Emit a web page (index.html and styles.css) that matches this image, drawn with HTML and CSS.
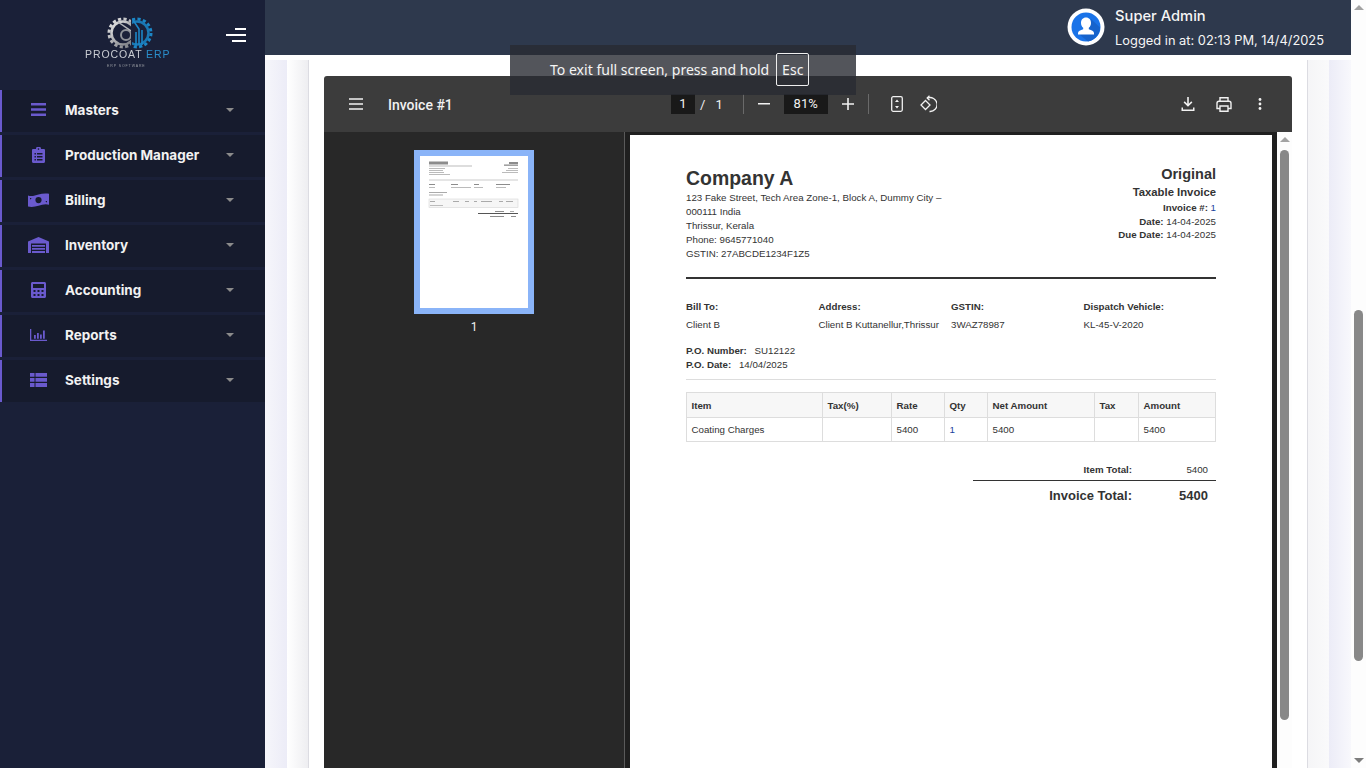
FILE: index.html
```html
<!DOCTYPE html>
<html lang="en">
<head>
    <meta charset="UTF-8">
    <title>Invoice #1</title>
    <link rel="stylesheet" href="styles.css">
</head>
<body>
    <div id="container">
        <aside id="sidebar">
            <div id="brand">
                <svg id="logo" width="90" height="52" viewBox="0 0 90 52">
                    <defs>
                        <linearGradient id="gear-grey" x1="0" y1="0" x2="1" y2="1">
                            <stop offset="0" stop-color="#e8e8e8"/>
                            <stop offset="1" stop-color="#70737a"/>
                        </linearGradient>
                        <clipPath id="clip-left"><rect x="20" y="0" width="28" height="34"/></clipPath>
                        <clipPath id="clip-right"><rect x="49" y="0" width="24" height="34"/></clipPath>
                    </defs>
                    <g clip-path="url(#clip-left)">
                        <circle cx="40" cy="17" r="14" fill="none" stroke="url(#gear-grey)" stroke-width="3" stroke-dasharray="3.200 2.300"/>
                        <circle cx="40" cy="17" r="11.500" fill="none" stroke="url(#gear-grey)" stroke-width="2.500"/>
                        <circle cx="43" cy="19" r="5" fill="none" stroke="#8f9298" stroke-width="2"/>
                        <path d="M35 6l13 9" stroke="#b5b7bb" stroke-width="1.500"/>
                    </g>
                    <g clip-path="url(#clip-right)">
                        <circle cx="54" cy="17" r="14" fill="none" stroke="#1c86c6" stroke-width="3" stroke-dasharray="3.200 2.300"/>
                        <circle cx="54" cy="17" r="11.500" fill="none" stroke="#1a78b4" stroke-width="2.500"/>
                        <path d="M50 4l6 9v16M53 30V16M59 29V14" fill="none" stroke="#1c86c6" stroke-width="1.600"/>
                    </g>
                    <text class="logo-name" x="2" y="42">PROCOAT <tspan fill="#2a8ecb">ERP</tspan></text>
                    <text class="logo-sub" x="24" y="51">ERP SOFTWARE</text>
                </svg>
                <svg id="nav-toggle" width="20" height="16" viewBox="0 0 20 16">
                    <path d="M9 2h11M0 8h20M6 14h14" stroke="#fff" stroke-width="2"/>
                </svg>
            </div>
            <nav id="menu">
                <a class="menu-item">
                    <span class="menu-icon">
                        <svg width="15" height="13" viewBox="0 0 15 13"><path d="M0 0h15v2.600H0zM0 5.200h15v2.600H0zM0 10.400h15V13H0z"/></svg>
                    </span>
                    <span class="menu-label">Masters</span><i class="caret"></i>
                </a>
                <a class="menu-item">
                    <span class="menu-icon">
                        <svg width="13" height="16" viewBox="0 0 13 16"><path fill-rule="evenodd" d="M1.200 2H4a2.500 2.500 0 0 1 5 0h2.800c.7 0 1.200.5 1.200 1.200v11.600c0 .7-.5 1.200-1.200 1.200H1.200C.5 16 0 15.500 0 14.800V3.200C0 2.500.5 2 1.200 2zM6.500 1.300a.8.8 0 1 0 0 1.600.8.8 0 0 0 0-1.600zM2.500 6v1.400h1.400V6zM5 6v1.400h5.500V6zM2.500 9v1.400h1.400V9zM5 9v1.400h5.500V9zM2.500 12v1.400h1.400V12zM5 12v1.400h5.500V12z"/></svg>
                    </span>
                    <span class="menu-label">Production Manager</span><i class="caret"></i>
                </a>
                <a class="menu-item">
                    <span class="menu-icon">
                        <svg width="21" height="14" viewBox="0 0 21 14"><path fill-rule="evenodd" d="M0 2.500C3.500 3.800 7 2.500 10.500 1.500 14 .5 17.500 0 21 .8v11c-3.500-1.300-7 0-10.500 1-3.500 1-7 1.500-10.500.7zM10.500 4a3.100 3.100 0 1 0 0 6.200 3.100 3.100 0 0 0 0-6.200zM2 5v1.500A2 2 0 0 0 3.500 5zM17.500 8A2 2 0 0 0 19 9.500V8z"/></svg>
                    </span>
                    <span class="menu-label">Billing</span><i class="caret"></i>
                </a>
                <a class="menu-item">
                    <span class="menu-icon">
                        <svg width="21" height="16" viewBox="0 0 21 16"><path fill-rule="evenodd" d="M0 16V4.500L10.500 0 21 4.500V16h-3V6.500H3V16zM4 8h13v1.800H4zM4 11h13v1.800H4zM4 14h13v2H4z"/></svg>
                    </span>
                    <span class="menu-label">Inventory</span><i class="caret"></i>
                </a>
                <a class="menu-item">
                    <span class="menu-icon">
                        <svg width="15" height="16" viewBox="0 0 15 16"><path fill-rule="evenodd" d="M1.500 0h12c.8 0 1.500.7 1.500 1.500v13c0 .8-.7 1.500-1.500 1.500h-12C.7 16 0 15.300 0 14.500v-13C0 .7.700 0 1.500 0zM2 2v4h11V2zM2.500 8v2h2V8zM6.500 8v2h2V8zM10.500 8v2h2V8zM2.500 12v2h2v-2zM6.500 12v2h2v-2zM10.500 12v2h2v-2z"/></svg>
                    </span>
                    <span class="menu-label">Accounting</span><i class="caret"></i>
                </a>
                <a class="menu-item">
                    <span class="menu-icon">
                        <svg width="17" height="12" viewBox="0 0 17 12"><path d="M0 0h1.300v10.700H17V12H0zM4 6h1.800v3.700H4zM7 4h1.800v5.700H7zM10 5.500h1.800v4.200H10zM13 1.500h1.800v8.200H13z"/></svg>
                    </span>
                    <span class="menu-label">Reports</span><i class="caret"></i>
                </a>
                <a class="menu-item">
                    <span class="menu-icon">
                        <svg width="17" height="14" viewBox="0 0 17 14"><path d="M0 0h4.500v3.800H0zM5.500 0H17v3.800H5.500zM0 5h4.500v3.800H0zM5.500 5H17v3.800H5.500zM0 10h4.500v4H0zM5.500 10H17v4H5.500z"/></svg>
                    </span>
                    <span class="menu-label">Settings</span><i class="caret"></i>
                </a>
            </nav>
        </aside>

        <div id="main-col">
            <header id="topbar">
                <svg id="avatar" width="38" height="38" viewBox="0 0 38 38">
                    <circle cx="19" cy="19" r="18.500" fill="#fff"/>
                    <circle cx="19" cy="19" r="14.500" fill="#1a73e8"/>
                    <path d="M24 11l9 8.500A14.500 14.500 0 0 1 21 33.400L13 27z" fill="#1663cc"/>
                    <path d="M19 9.500c3.200 0 5 2.400 5 5.400 0 2-.9 3.800-2.200 4.900v1.500c2.700 1 5.200 1.800 5.200 3.600v1.600H11v-1.600c0-1.800 2.500-2.600 5.200-3.600v-1.500c-1.300-1.100-2.200-2.900-2.200-4.900 0-3 1.800-5.400 5-5.400z" fill="#fff"/>
                </svg>
                <div id="user-info">
                    <div id="user-name">Super Admin</div>
                    <div id="user-login">Logged in at: 02:13 PM, 14/4/2025</div>
                </div>
            </header>

            <main id="page-bg">
                <div id="page-inner">
                    <section id="card">
                        <div id="viewer">
                            <div id="pdf-toolbar">
                                <div id="tb-left">
                                    <svg class="tb-icon" width="16" height="12" viewBox="0 0 16 12"><path d="M1 1h14M1 6h14M1 11h14" stroke="#f1f1f1" stroke-width="1.400"/></svg>
                                    <span id="pdf-title">Invoice #1</span>
                                </div>
                                <div id="tb-center">
                                    <span class="tb-input page-input">1</span>
                                    <span class="tb-sep">/</span>
                                    <span class="tb-num">1</span>
                                    <i class="tb-divider first"></i>
                                    <svg class="zoom-out" width="12" height="2" viewBox="0 0 12 2"><path d="M0 0h12v1.600H0z" fill="#f1f1f1"/></svg>
                                    <span class="tb-input zoom-input">81%</span>
                                    <svg class="zoom-in" width="12" height="12" viewBox="0 0 12 12"><path d="M5.200 0h1.600v5.200H12v1.600H6.800V12H5.200V6.800H0V5.200h5.200z" fill="#f1f1f1"/></svg>
                                    <i class="tb-divider second"></i>
                                    <svg class="fit-icon" width="12" height="16" viewBox="0 0 12 16"><rect x=".7" y=".7" width="10.600" height="14.600" rx="1.500" fill="none" stroke="#f1f1f1" stroke-width="1.300"/><path d="M6 3.500 8 6H4zM6 12.500 4 10h4z" fill="#f1f1f1"/></svg>
                                    <svg class="rotate-icon" width="18" height="18" viewBox="0 0 18 18"><path d="M6.500 5.500 11 10l-4.500 4.500L2 10z" fill="none" stroke="#f1f1f1" stroke-width="1.300"/><path d="M8.500 3A7 7 0 1 1 10.500 16.500" fill="none" stroke="#f1f1f1" stroke-width="1.300"/><path d="M10.500 .8 8.200 3l2.300 2.200" fill="none" stroke="#f1f1f1" stroke-width="1.300"/></svg>
                                </div>
                                <div id="tb-right">
                                    <svg width="14" height="14" viewBox="0 0 14 14"><path d="M6.200 0h1.600v6.800l2.500-2.500 1.100 1.100L7 9.800 2.600 5.400l1.100-1.100 2.500 2.500zM.5 10.500h1.500v2h10v-2h1.500V14H.5z" fill="#f1f1f1"/></svg>
                                    <svg width="16" height="15" viewBox="0 0 16 15"><path d="M4 4V.7h8V4M4 11.500H1V6.200C1 5 1.800 4.300 3 4.300h10c1.200 0 2 .7 2 1.900v5.300h-3M4 9h8v5.300H4z" fill="none" stroke="#f1f1f1" stroke-width="1.400"/></svg>
                                    <svg class="more-icon" width="4" height="12" viewBox="0 0 4 12"><circle cx="2" cy="1.500" r="1.400" fill="#f1f1f1"/><circle cx="2" cy="6" r="1.400" fill="#f1f1f1"/><circle cx="2" cy="10.500" r="1.400" fill="#f1f1f1"/></svg>
                                </div>
                            </div>

                            <div id="pdf-body">
                                <div id="thumbs">
                                    <div id="thumb-frame">
                                        <svg class="thumb-page" width="108" height="152" viewBox="0 0 108 152">
                                            <rect width="108" height="152" fill="#fff"/>
                                            <g fill="#8c8c8c">
                                                <rect x="9" y="5.500" width="19" height="3"/>
                                                <rect x="9" y="9.500" width="43" height="1" fill="#bbb"/>
                                                <rect x="9" y="12" width="16" height="1" fill="#bbb"/>
                                                <rect x="9" y="14" width="14" height="1" fill="#bbb"/>
                                                <rect x="9" y="16" width="15" height="1" fill="#bbb"/>
                                                <rect x="9" y="18" width="21" height="1" fill="#bbb"/>
                                                <rect x="89" y="6" width="9" height="2"/>
                                                <rect x="84" y="8.500" width="14" height="1.300"/>
                                                <rect x="88" y="12" width="10" height="1" fill="#bbb"/>
                                                <rect x="86" y="14" width="12" height="1" fill="#bbb"/>
                                                <rect x="82" y="16" width="16" height="1" fill="#bbb"/>
                                                <rect x="9" y="23.500" width="89" height="1" fill="#ccc"/>
                                                <rect x="9" y="28" width="6" height="1"/>
                                                <rect x="31" y="28" width="7" height="1"/>
                                                <rect x="54" y="28" width="5" height="1"/>
                                                <rect x="76" y="28" width="14" height="1"/>
                                                <rect x="9" y="31" width="6" height="1" fill="#bbb"/>
                                                <rect x="31" y="31" width="20" height="1" fill="#bbb"/>
                                                <rect x="54" y="31" width="9" height="1" fill="#bbb"/>
                                                <rect x="76" y="31" width="10" height="1" fill="#bbb"/>
                                                <rect x="9" y="36" width="18" height="1" fill="#aaa"/>
                                                <rect x="9" y="38.500" width="14" height="1" fill="#aaa"/>
                                                <rect x="9" y="43" width="89" height="8.500" fill="#f6f6f6" stroke="#d8d8d8" stroke-width=".6"/>
                                                <rect x="10" y="45" width="5" height="1" fill="#aaa"/>
                                                <rect x="33" y="45" width="6" height="1" fill="#aaa"/>
                                                <rect x="45" y="45" width="4" height="1" fill="#aaa"/>
                                                <rect x="54" y="45" width="3" height="1" fill="#aaa"/>
                                                <rect x="61" y="45" width="11" height="1" fill="#aaa"/>
                                                <rect x="79" y="45" width="4" height="1" fill="#aaa"/>
                                                <rect x="86" y="45" width="7" height="1" fill="#aaa"/>
                                                <rect x="10" y="49" width="13" height="1" fill="#bbb"/>
                                                <rect x="75" y="55" width="9" height="1"/>
                                                <rect x="90" y="55" width="4" height="1" fill="#aaa"/>
                                                <rect x="58" y="57" width="40" height="1" fill="#555"/>
                                                <rect x="70" y="60" width="14" height="1"/>
                                                <rect x="91" y="60" width="5" height="1"/>
                                            </g>
                                        </svg>
                                    </div>
                                    <div id="thumb-num">1</div>
                                </div>
                                <div id="doc-area">
                                    <article id="invoice">
                                        <div class="inv-head">
                                            <div class="inv-company">
                                                <h1>Company A</h1>
                                                <p>123 Fake Street, Tech Area Zone-1, Block A, Dummy City – 000111 India</p>
                                                <p>Thrissur, Kerala</p>
                                                <p>Phone: 9645771040</p>
                                                <p>GSTIN: 27ABCDE1234F1Z5</p>
                                            </div>
                                            <div class="inv-meta">
                                                <div class="inv-original">Original</div>
                                                <div class="inv-type">Taxable Invoice</div>
                                                <div class="inv-line"><b>Invoice #:</b> <span class="link">1</span></div>
                                                <div class="inv-line"><b>Date:</b> 14-04-2025</div>
                                                <div class="inv-line"><b>Due Date:</b> 14-04-2025</div>
                                            </div>
                                        </div>
                                        <hr class="rule-dark">
                                        <div class="inv-parties">
                                            <div><b>Bill To:</b><span>Client B</span></div>
                                            <div><b>Address:</b><span>Client B Kuttanellur,Thrissur</span></div>
                                            <div><b>GSTIN:</b><span>3WAZ78987</span></div>
                                            <div><b>Dispatch Vehicle:</b><span>KL-45-V-2020</span></div>
                                        </div>
                                        <div class="inv-po">
                                            <div><b>P.O. Number:</b> SU12122</div>
                                            <div><b>P.O. Date:</b> 14/04/2025</div>
                                        </div>
                                        <hr class="rule-light">
                                        <table class="inv-table">
                                            <colgroup>
                                                <col class="c-item"><col class="c-tax"><col class="c-rate"><col class="c-qty"><col class="c-net"><col class="c-t"><col class="c-amt">
                                            </colgroup>
                                            <thead>
                                                <tr><th>Item</th><th>Tax(%)</th><th>Rate</th><th>Qty</th><th>Net Amount</th><th>Tax</th><th>Amount</th></tr>
                                            </thead>
                                            <tbody>
                                                <tr><td>Coating Charges</td><td></td><td>5400</td><td class="link">1</td><td>5400</td><td></td><td>5400</td></tr>
                                            </tbody>
                                        </table>
                                        <div class="inv-totals">
                                            <div class="tot-row"><b>Item Total:</b><span>5400</span></div>
                                            <div class="tot-row grand"><b>Invoice Total:</b><b>5400</b></div>
                                        </div>
                                    </article>
                                </div>
                                <div id="doc-scroll">
                                    <i class="arrow-up"></i>
                                    <div id="doc-thumb"></div>
                                </div>
                            </div>
                        </div>
                    </section>
                </div>
            </main>
        </div>

        <div id="page-scroll">
            <i class="arrow-up"></i>
            <div id="page-thumb"></div>
            <i class="arrow-down"></i>
        </div>
    </div>

    <div id="fs-toast">
        <span>To exit full screen, press and hold</span>
        <kbd>Esc</kbd>
    </div>
</body>
</html>
```

FILE: styles.css
```css
:root {
    --sidebar-color: #1a2038;
    --item-color: #161b2d;
    --accent-color: #6a5acd;
    --topbar-color: #2e394d;
    --pdf-bar-color: #3c3c3c;
    --pdf-bg-color: #282828;
    --ink-color: #333;
}

* {
    box-sizing: border-box;
}

html, body {
    margin: 0;
    padding: 0;
    height: 100%;
    overflow: hidden;
}

body {
    font-family: Inter, sans-serif;
    background-color: #fff;
}

#container {
    display: flex;
    height: 768px;
}

/* sidebar */
#sidebar {
    flex: 0 0 265px;
    background-color: var(--sidebar-color);
}

#brand {
    height: 90px;
    display: flex;
    align-items: flex-start;
    padding: 16px 19px 0 83px;
    justify-content: space-between;
}

#logo {
    filter: blur(0.3px);
}

#nav-toggle {
    margin-top: 11px;
}

.logo-name {
    font-family: "Liberation Sans", sans-serif;
    font-size: 10.500px;
    letter-spacing: 0.9px;
    fill: #c9ccd2;
}

.logo-sub {
    font-family: "Liberation Sans", sans-serif;
    font-size: 3.500px;
    letter-spacing: 0.9px;
    fill: #9a9da3;
}

#menu {
    display: flex;
    flex-direction: column;
    gap: 3px;
}

.menu-item {
    height: 42px;
    padding-bottom: 3px;
    display: flex;
    align-items: center;
    background-color: var(--item-color);
    border-left: 2px solid var(--accent-color);
    color: #f2f2f2;
}

.menu-icon {
    flex: 0 0 63px;
    padding-left: 12px;
    padding-right: 2px;
    display: flex;
    justify-content: center;
}

.menu-icon svg {
    fill: var(--accent-color);
}

.menu-label {
    flex: 1;
    font-size: 13.500px;
    font-weight: 700;
}

.caret {
    width: 0;
    height: 0;
    margin-right: 31px;
    border-left: 4px solid transparent;
    border-right: 4px solid transparent;
    border-top: 4px solid #8b8b8b;
}

/* top bar */
#main-col {
    flex: 1;
    display: flex;
    flex-direction: column;
    min-width: 0;
}

#topbar {
    flex: 0 0 55px;
    background-color: var(--topbar-color);
    display: flex;
    align-items: flex-start;
    justify-content: flex-end;
    padding: 8px 27px 0 0;
    color: #f5f5f5;
}

#avatar {
    margin-right: 10px;
}

#user-name {
    font-size: 14.700px;
    font-weight: 500;
    line-height: 16px;
}

#user-login {
    font-size: 12.850px;
    line-height: 17px;
    margin-top: 8px;
}

/* background strips round the card */
#page-bg {
    flex: 1;
    margin-top: 5px;
    padding: 0 22px;
    background: linear-gradient(90deg, #f6f6fb, #ececf7 22px, #fff 22px, #fff calc(100% - 22px), #ececf7 calc(100% - 22px), #f8f8fc);
    min-height: 0;
}

#page-inner {
    height: 100%;
    padding: 0 21px;
    background: linear-gradient(90deg, #fff, #eeeef1 21px, #fff 21px, #fff calc(100% - 21px), #f5f5f7 calc(100% - 21px), #fafafb);
}

#card {
    height: 100%;
    padding: 16px 15px 0 15px;
    background-color: #fff;
    border-left: 1px solid #dcdce2;
    border-right: 1px solid #dcdce2;
}

/* pdf viewer */
#viewer {
    height: 100%;
    display: flex;
    flex-direction: column;
    border-radius: 3px 3px 0 0;
    overflow: hidden;
}

#pdf-toolbar {
    flex: 0 0 56px;
    background-color: var(--pdf-bar-color);
    display: flex;
    align-items: center;
    font-family: Roboto, sans-serif;
    color: #f1f1f1;
    font-size: 13px;
}

#tb-left {
    flex: 0 0 347px;
    display: flex;
    align-items: center;
    padding-left: 24px;
}

#pdf-title {
    margin-left: 24px;
    margin-top: 2px;
    font-size: 14px;
    font-weight: 500;
}

#tb-center {
    display: flex;
    align-items: center;
}

.tb-input {
    background-color: #191919;
    height: 20px;
    line-height: 20px;
    text-align: center;
}

.page-input {
    width: 24px;
}

.tb-sep {
    margin-left: 5px;
}

.tb-num {
    margin-left: 10px;
}

.tb-divider {
    width: 1px;
    height: 20px;
    background-color: #6a6a6a;
}

.tb-divider.first {
    margin-left: 20px;
}

.zoom-out {
    margin-left: 14px;
}

.zoom-input {
    width: 44px;
    margin-left: 14px;
}

.zoom-in {
    margin-left: 14px;
}

.tb-divider.second {
    margin-left: 14px;
}

.fit-icon {
    margin-left: 22px;
}

.rotate-icon {
    margin-left: 16px;
}

#tb-right {
    margin-left: auto;
    display: flex;
    align-items: center;
    gap: 21px;
    padding-right: 30px;
}

.more-icon {
    margin-left: 5px;
}

#pdf-body {
    flex: 1;
    display: flex;
    min-height: 0;
    background-color: var(--pdf-bg-color);
}

#thumbs {
    flex: 0 0 301px;
    border-right: 1px solid #5a5a5a;
    padding-top: 18px;
    display: flex;
    flex-direction: column;
    align-items: center;
}

#thumb-frame {
    border: 6px solid #8ab4f8;
    line-height: 0;
}

.thumb-page {
    filter: blur(0.4px);
}

#thumb-num {
    margin-top: 6px;
    font-family: Roboto, sans-serif;
    font-size: 12px;
    line-height: 15px;
    color: #f1f1f1;
}

#doc-area {
    flex: 1;
    background-color: #1f1f1f;
    padding: 3px 5px 0 5px;
    min-width: 0;
}

#doc-scroll {
    flex: 0 0 15px;
    background-color: #fdfdfd;
    position: relative;
    padding: 0 3px;
}

#doc-thumb {
    height: 570px;
    margin-top: 18px;
    background-color: #888;
    border-radius: 5px;
}

.arrow-up, .arrow-down {
    position: absolute;
    left: 50%;
    margin-left: -5px;
    width: 0;
    height: 0;
    border-left: 5px solid transparent;
    border-right: 5px solid transparent;
}

.arrow-up {
    top: 5px;
    border-bottom: 5px solid #a3a3a3;
}

.arrow-down {
    bottom: 5px;
    border-top: 5px solid #7d7d7d;
}

/* invoice page */
#invoice {
    height: 100%;
    background-color: #fff;
    padding: 30px 56px 0 56px;
    font-family: "Liberation Sans", Arial, sans-serif;
    font-size: 9.720px;
    line-height: 14px;
    color: var(--ink-color);
}

.inv-head {
    display: flex;
    justify-content: space-between;
}

.inv-company {
    width: 265px;
}

.inv-company h1 {
    margin: 0;
    font-size: 19.440px;
    line-height: 26px;
    font-weight: 700;
}

.inv-company p {
    margin: 0;
}

.inv-meta {
    text-align: right;
    line-height: 13.500px;
}

.inv-original {
    font-size: 14.500px;
    font-weight: 700;
    line-height: 18px;
}

.inv-type {
    font-size: 11.300px;
    font-weight: 700;
    line-height: 18px;
}

.inv-line {
    height: 13.500px;
}

.link {
    color: #1a3f9c;
}

.rule-dark {
    margin: 16px 0 0 0;
    border: 0;
    border-top: 2px solid #333;
}

.inv-parties {
    display: grid;
    grid-template-columns: repeat(4, 132.500px);
    margin-top: 21px;
}

.inv-parties b {
    display: block;
    margin-bottom: 4px;
}

.inv-parties span {
    white-space: nowrap;
}

.inv-po {
    margin-top: 12px;
}

.inv-po b {
    margin-right: 5px;
}

.rule-light {
    margin: 7px 0 0 0;
    border: 0;
    border-top: 1px solid #ddd;
}

.inv-table {
    margin-top: 12px;
    width: 529px;
    border-collapse: collapse;
    table-layout: fixed;
}

.inv-table th, .inv-table td {
    border: 1px solid #ddd;
    text-align: left;
    padding: 0 4.500px;
    font-size: 9.720px;
}

.inv-table th {
    background-color: #f7f7f7;
    height: 25px;
    padding-top: 1px;
}

.inv-table td {
    height: 24px;
}

.c-item { width: 136px; }
.c-tax { width: 69px; }
.c-rate { width: 53px; }
.c-qty { width: 43px; }
.c-net { width: 107px; }
.c-t { width: 44px; }
.c-amt { width: 77px; }

.inv-totals {
    margin: 21px 0 0 auto;
    width: 243px;
}

.tot-row {
    display: grid;
    grid-template-columns: 159px 76px;
    height: 18px;
    border-bottom: 1.500px solid #333;
    text-align: right;
}

.tot-row.grand {
    border-bottom: 0;
    font-size: 13px;
    height: 30px;
    line-height: 30px;
}

/* page scrollbar */
#page-scroll {
    flex: 0 0 15px;
    background-color: #fdfdfd;
    position: relative;
    padding: 310px 3px 0;
}

#page-thumb {
    height: 351px;
    background-color: #888;
    border-radius: 5px;
}

/* browser full screen notice */
#fs-toast {
    position: absolute;
    left: 510px;
    top: 45px;
    width: 346px;
    height: 50px;
    background-color: rgba(40, 43, 50, 0.8);
    display: flex;
    align-items: center;
    padding: 0 0 1px 40px;
    font-family: "Noto Sans", sans-serif;
    font-size: 14.050px;
    color: #f4f4f4;
}

#fs-toast kbd {
    font-family: inherit;
    margin-left: 7px;
    width: 33px;
    height: 33px;
    border: 1px solid #eee;
    border-radius: 2px;
    display: flex;
    align-items: center;
    justify-content: center;
}
```
